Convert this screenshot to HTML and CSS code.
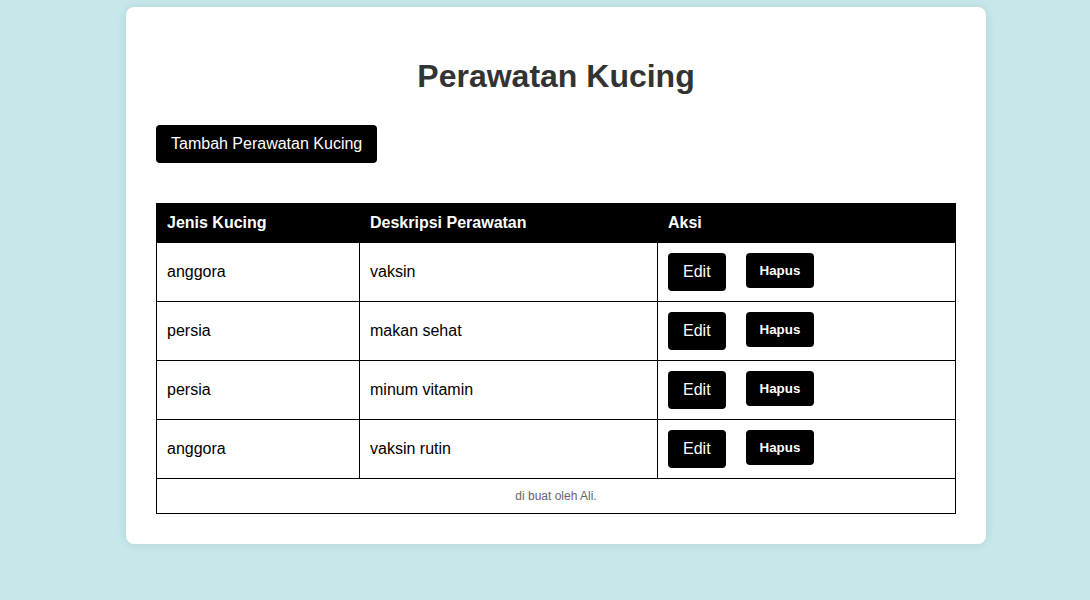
FILE: index.html
```html
<!DOCTYPE html>
<html lang="id">
<head>
<meta charset="utf-8">
<title>Perawatan Kucing</title>
<link rel="stylesheet" href="styles.css">
</head>
<body>
<div class="container">
  <h1 class="title">Perawatan Kucing</h1>
  <div class="toolbar">
    <a class="btn btn-add" href="#">Tambah Perawatan Kucing</a>
  </div>
  <table class="data">
    <thead>
      <tr>
        <th class="c1">Jenis Kucing</th>
        <th class="c2">Deskripsi Perawatan</th>
        <th class="c3">Aksi</th>
      </tr>
    </thead>
    <tbody>
      <tr>
        <td>anggora</td>
        <td>vaksin</td>
        <td><div class="actions"><a class="btn btn-edit" href="#">Edit</a><button class="btn btn-del">Hapus</button></div></td>
      </tr>
      <tr>
        <td>persia</td>
        <td>makan sehat</td>
        <td><div class="actions"><a class="btn btn-edit" href="#">Edit</a><button class="btn btn-del">Hapus</button></div></td>
      </tr>
      <tr>
        <td>persia</td>
        <td>minum vitamin</td>
        <td><div class="actions"><a class="btn btn-edit" href="#">Edit</a><button class="btn btn-del">Hapus</button></div></td>
      </tr>
      <tr>
        <td>anggora</td>
        <td>vaksin rutin</td>
        <td><div class="actions"><a class="btn btn-edit" href="#">Edit</a><button class="btn btn-del">Hapus</button></div></td>
      </tr>
    </tbody>
    <tfoot>
      <tr>
        <td class="footer" colspan="3">di buat oleh Ali.</td>
      </tr>
    </tfoot>
  </table>
</div>
</body>
</html>
```
FILE: styles.css
```css
html, body {
  margin: 0;
  padding: 0;
}
body {
  background: #c6e8ea;
  font-family: "Liberation Sans", Arial, sans-serif;
  padding: 7px 0 0 22px;
  min-height: 600px;
  box-sizing: border-box;
}
.container {
  width: 860px;
  box-sizing: border-box;
  margin: 0 auto;
  background: #fff;
  border-radius: 8px;
  padding: 30px;
  box-shadow: 0 0 10px rgba(0, 0, 0, 0.1);
}
.title {
  font-size: 32px;
  font-weight: bold;
  color: #333;
  text-align: center;
  margin: 21px 0 30px;
  line-height: 37px;
}
.toolbar {
  display: flex;
  margin-bottom: 40px;
}
.btn {
  display: inline-block;
  background: #000;
  color: #fff;
  text-decoration: none;
  border: none;
  border-radius: 4px;
  font-family: "Liberation Sans", Arial, sans-serif;
  cursor: pointer;
}
.btn-add {
  font-size: 16px;
  line-height: 18px;
  padding: 10px 15px;
}
.data {
  width: 800px;
  border-collapse: collapse;
  table-layout: fixed;
  font-size: 16px;
  color: #000;
}
.data th, .data td {
  border: 1px solid #000;
  padding: 10px;
  text-align: left;
  line-height: 18px;
}
.data th {
  background: #000;
  color: #fff;
  font-weight: bold;
  height: 18px;
}
.c1 { width: 182px; }
.c2 { width: 277px; }
.data td {
  height: 38px;
  vertical-align: middle;
}
.actions {
  display: flex;
  align-items: flex-start;
  gap: 20px;
}
.btn-edit {
  font-size: 16px;
  line-height: 18px;
  padding: 10px 15px;
}
.btn-del {
  font-size: 13.333px;
  font-weight: bold;
  line-height: 15px;
  padding: 10px 14px;
}
.data td.footer {
  height: auto;
  text-align: center;
  font-size: 12px;
  line-height: 14px;
  color: #666;
  padding: 10px;
}
```
